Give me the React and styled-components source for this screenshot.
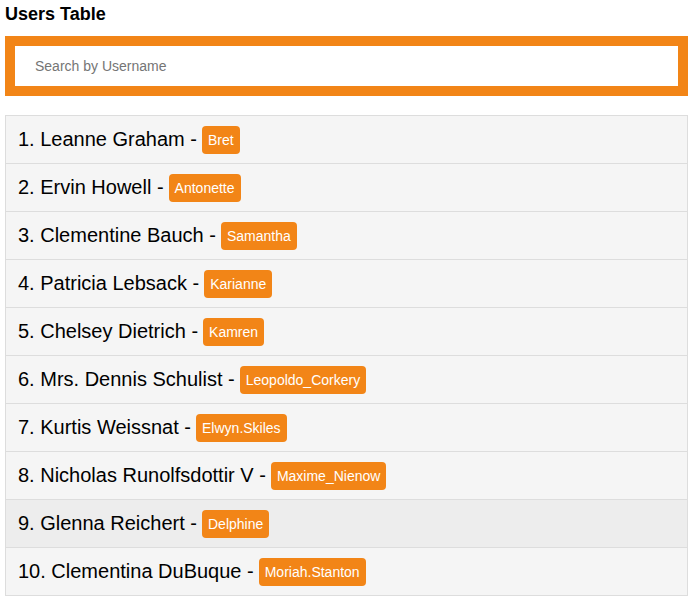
import React, { useState } from 'react';
import styled, { createGlobalStyle } from 'styled-components';

const orange = '#f28517';

const users = [
  { id: 1, name: 'Leanne Graham', username: 'Bret' },
  { id: 2, name: 'Ervin Howell', username: 'Antonette' },
  { id: 3, name: 'Clementine Bauch', username: 'Samantha' },
  { id: 4, name: 'Patricia Lebsack', username: 'Karianne' },
  { id: 5, name: 'Chelsey Dietrich', username: 'Kamren' },
  { id: 6, name: 'Mrs. Dennis Schulist', username: 'Leopoldo_Corkery' },
  { id: 7, name: 'Kurtis Weissnat', username: 'Elwyn.Skiles' },
  { id: 8, name: 'Nicholas Runolfsdottir V', username: 'Maxime_Nienow' },
  { id: 9, name: 'Glenna Reichert', username: 'Delphine' },
  { id: 10, name: 'Clementina DuBuque', username: 'Moriah.Stanton' },
];

const GlobalStyle = createGlobalStyle`
  body {
    margin: 0;
    font-family: "Liberation Sans", Arial, sans-serif;
    background: #fff;
    color: #000;
  }
`;

const Page = styled.div`
  padding: 4px 7px 0 5px;
`;

const Title = styled.h4`
  margin: 0 0 12px;
  font-size: 18px;
  line-height: 20px;
  font-weight: bold;
`;

const SearchBox = styled.div`
  background: ${orange};
  padding: 10px;
  margin-bottom: 19px;
`;

const SearchInput = styled.input`
  display: block;
  box-sizing: border-box;
  width: 100%;
  height: 40px;
  border: none;
  outline: none;
  padding: 0 20px;
  font-family: "Liberation Sans", Arial, sans-serif;
  font-size: 14px;
  color: #333;
  background: #fff;

  &::placeholder {
    color: #757575;
  }
`;

const List = styled.ul`
  list-style: none;
  margin: 0;
  padding: 0;
  border: 1px solid #ddd;
`;

const Row = styled.li`
  display: flex;
  align-items: center;
  height: 47px;
  padding: 0 12px;
  font-size: 20px;
  background: ${props => (props.$active ? '#ededed' : '#f5f5f5')};
  border-top: 1px solid #ddd;

  &:first-child {
    border-top: none;
  }
`;

const Name = styled.span`
  white-space: pre;
`;

const Badge = styled.span`
  display: inline-block;
  margin-left: 5px;
  padding: 5px 6px;
  line-height: 18px;
  font-size: 14px;
  color: #fff;
  background: ${orange};
  border-radius: 4px;
`;

export default function App() {
  const [query, setQuery] = useState('');

  const visible = users.filter(user =>
    user.username.toLowerCase().includes(query.toLowerCase())
  );

  return (
    <Page>
      <GlobalStyle />
      <Title>Users Table</Title>
      <SearchBox>
        <SearchInput
          placeholder="Search by Username"
          value={query}
          onChange={e => setQuery(e.target.value)}
        />
      </SearchBox>
      <List>
        {visible.map(user => (
          <Row key={user.id} $active={user.id === 9}>
            <Name>{`${user.id}. ${user.name} -`}</Name>
            <Badge>{user.username}</Badge>
          </Row>
        ))}
      </List>
    </Page>
  );
}
